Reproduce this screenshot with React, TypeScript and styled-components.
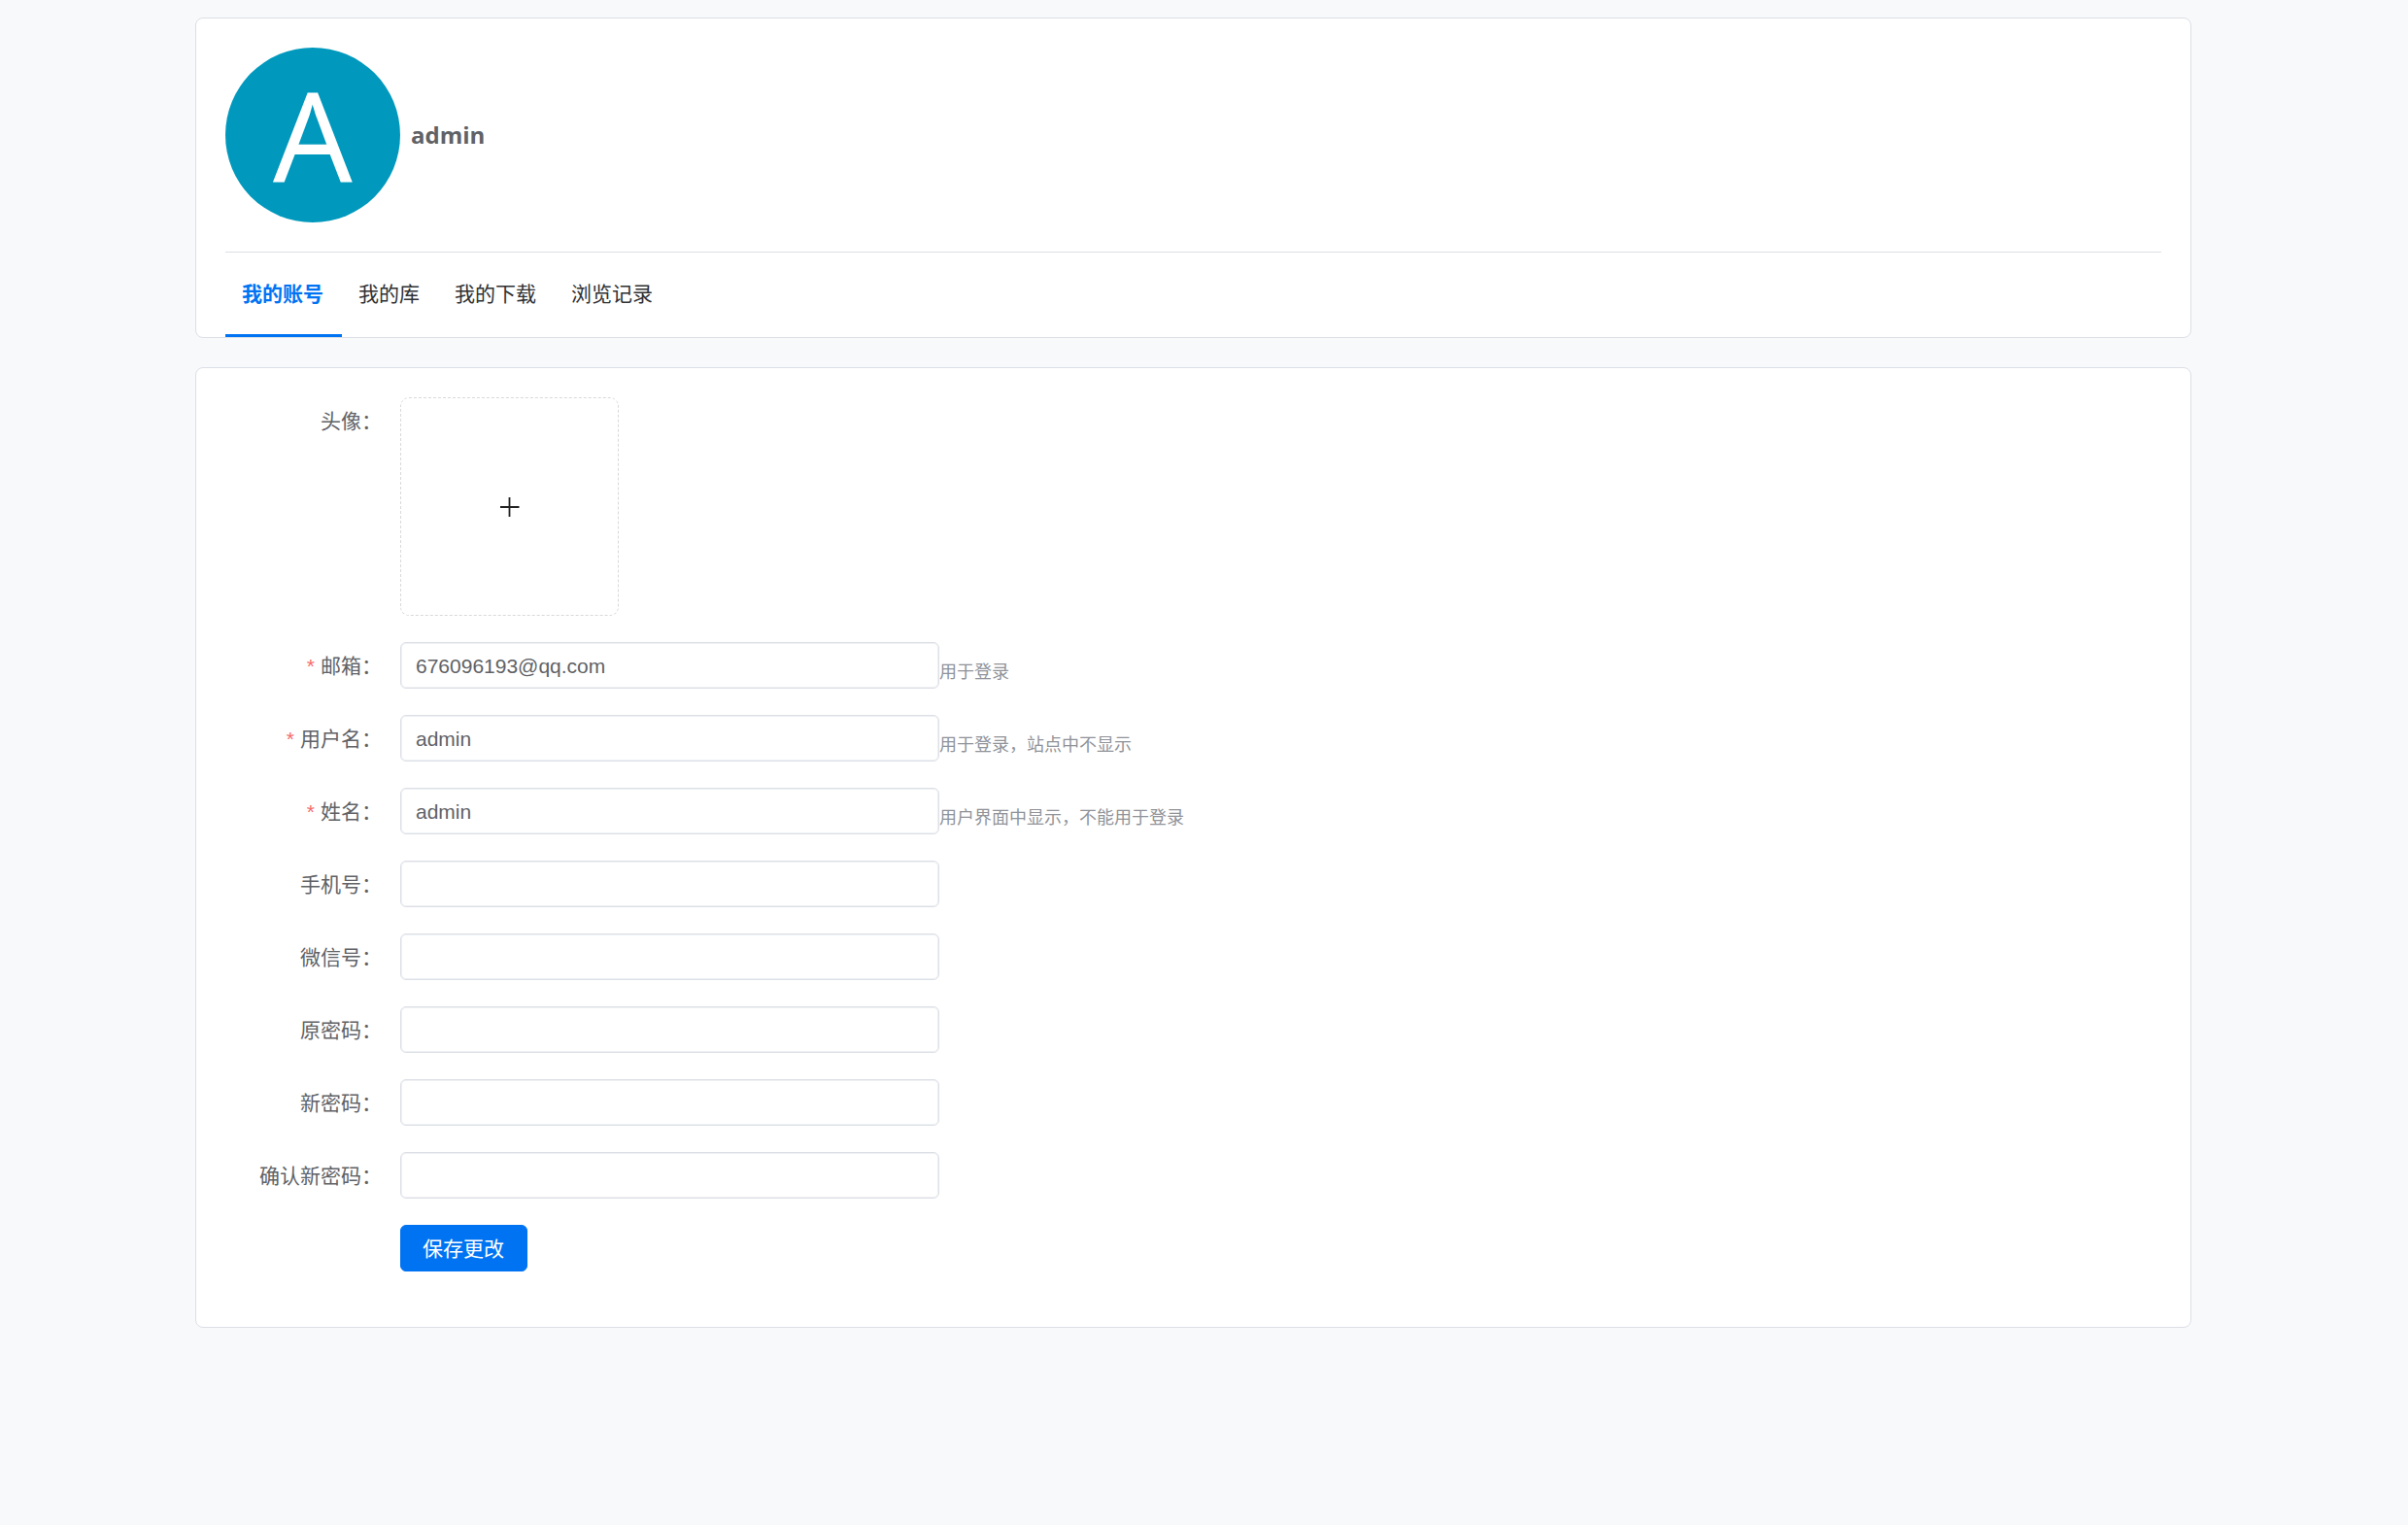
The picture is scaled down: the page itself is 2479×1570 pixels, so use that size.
import React, { useState } from "react";
import styled, { createGlobalStyle } from "styled-components";

const color = {
  page: "#f8f9fb",
  card: "#ffffff",
  border: "#dcdfe6",
  primary: "#0073f3",
  avatar: "#0099bd",
  text: "#606266",
  heading: "#303133",
  hint: "#909399",
  danger: "#f56c6c",
};

const GlobalStyle = createGlobalStyle`
  *, *::before, *::after { box-sizing: border-box; }
  body {
    margin: 0;
    background: ${color.page};
    color: ${color.text};
    font-family: "Open Sans", "Noto Sans CJK SC", sans-serif;
    font-size: 21px;
    font-weight: 400;
  }
`;

const Page = styled.main`
  min-height: 100vh;
  padding: 18px 22px 18px 0;
`;

const Container = styled.div`
  display: flex;
  flex-direction: column;
  gap: 30px;
  width: 100%;
  max-width: 2055px;
  margin: 0 auto;
`;

const Card = styled.section`
  padding: 30px;
  background: ${color.card};
  border: 1px solid ${color.border};
  border-radius: 8px;
`;

const ProfileCard = styled(Card)`
  padding-bottom: 0;
`;

const Profile = styled.header`
  display: flex;
  align-items: center;
  gap: 11px;
  padding-bottom: 30px;
  border-bottom: 1px solid ${color.border};
`;

const Avatar = styled.div`
  display: flex;
  align-items: center;
  justify-content: center;
  width: 180px;
  height: 180px;
  padding-bottom: 2px;
  border-radius: 50%;
  background: ${color.avatar};
  color: #ffffff;
  font-family: "Noto Sans", sans-serif;
  font-size: 128px;
  font-weight: 400;
  line-height: 1;
`;

const UserName = styled.h1`
  margin: 0;
  font-size: 24px;
  font-weight: 700;
  line-height: 36px;
`;

const Tabs = styled.nav`
  display: flex;
`;

const Tab = styled.a<{ $active: boolean }>`
  height: 87px;
  padding: 0 19px 0 17px;
  border-bottom: 3px solid ${(p) => (p.$active ? color.primary : "transparent")};
  color: ${(p) => (p.$active ? color.primary : color.heading)};
  font-weight: ${(p) => (p.$active ? 700 : 400)};
  line-height: 84px;
  text-decoration: none;
`;

const Form = styled.form`
  display: flex;
  flex-direction: column;
  gap: 27px;
  padding-bottom: 27px;
`;

const Row = styled.div`
  display: flex;
  align-items: flex-start;
`;

const Label = styled.label<{ $required?: boolean }>`
  flex: none;
  width: 180px;
  padding-right: 19px;
  line-height: 48px;
  text-align: right;
  white-space: nowrap;

  &::before {
    content: ${(p) => (p.$required ? '"*"' : "none")};
    margin-right: 6px;
    color: ${color.danger};
    font-family: "Liberation Sans", sans-serif;
    line-height: 1;
  }
`;

const Control = styled.div`
  display: flex;
  flex: 1;
  align-items: flex-end;
  min-width: 0;
`;

const TextInput = styled.input`
  width: 555px;
  height: 48px;
  padding: 1px 15px 0;
  background: #ffffff;
  border: 1px solid ${color.border};
  border-radius: 6px;
  box-shadow: inset 0 0 0 1px #eef0f3;
  color: ${color.text};
  font-family: "Liberation Sans", "Noto Sans CJK SC", sans-serif;
  font-size: 21px;
  outline: none;

  &:focus {
    border-color: ${color.primary};
  }
`;

const Hint = styled.span`
  color: ${color.hint};
  font-size: 18px;
  line-height: 36px;
`;

const UploadButton = styled.button`
  display: flex;
  align-items: center;
  justify-content: center;
  width: 225px;
  height: 225px;
  padding: 0;
  background: transparent;
  border: 1px dashed #d9d9d9;
  border-radius: 9px;
  color: #222222;
  cursor: pointer;
`;

const SubmitButton = styled.button`
  height: 48px;
  margin-left: 180px;
  padding: 0 23px 0 22px;
  background: ${color.primary};
  border: 1px solid ${color.primary};
  border-radius: 6px;
  color: #ffffff;
  font: inherit;
  line-height: 24px;
  cursor: pointer;
`;

const PlusIcon = () => (
  <svg width="20" height="20" viewBox="0 0 20 20" fill="none" stroke="currentColor" strokeWidth="1.8" aria-hidden="true">
    <path d="M9.5 0v20M0 10h19.5" />
  </svg>
);

const tabs = ["我的账号", "我的库", "我的下载", "浏览记录"];

interface Field {
  id: string;
  label: string;
  type: string;
  value?: string;
  hint?: string;
  required?: boolean;
}

const fields: Field[] = [
  { id: "email", label: "邮箱：", type: "text", value: "676096193@qq.com", hint: "用于登录", required: true },
  { id: "username", label: "用户名：", type: "text", value: "admin", hint: "用于登录，站点中不显示", required: true },
  { id: "name", label: "姓名：", type: "text", value: "admin", hint: "用户界面中显示，不能用于登录", required: true },
  { id: "phone", label: "手机号：", type: "text" },
  { id: "wechat", label: "微信号：", type: "text" },
  { id: "old-password", label: "原密码：", type: "password" },
  { id: "new-password", label: "新密码：", type: "password" },
  { id: "confirm-password", label: "确认新密码：", type: "password" },
];

export default function App() {
  const [active, setActive] = useState(tabs[0]);

  return (
    <Page lang="zh-CN">
      <GlobalStyle />
      <Container>
        <ProfileCard>
          <Profile>
            <Avatar>A</Avatar>
            <UserName>admin</UserName>
          </Profile>
          <Tabs>
            {tabs.map((tab) => (
              <Tab
                key={tab}
                href="#"
                $active={tab === active}
                onClick={(e) => {
                  e.preventDefault();
                  setActive(tab);
                }}
              >
                {tab}
              </Tab>
            ))}
          </Tabs>
        </ProfileCard>

        <Card>
          <Form onSubmit={(e) => e.preventDefault()}>
            <Row>
              <Label htmlFor="avatar">头像：</Label>
              <UploadButton id="avatar" type="button" aria-label="头像">
                <PlusIcon />
              </UploadButton>
            </Row>
            {fields.map((field) => (
              <Row key={field.id}>
                <Label htmlFor={field.id} $required={field.required}>
                  {field.label}
                </Label>
                <Control>
                  <TextInput id={field.id} type={field.type} defaultValue={field.value} autoComplete="off" />
                  {field.hint && <Hint>{field.hint}</Hint>}
                </Control>
              </Row>
            ))}
            <Row>
              <SubmitButton type="submit">保存更改</SubmitButton>
            </Row>
          </Form>
        </Card>
      </Container>
    </Page>
  );
}
